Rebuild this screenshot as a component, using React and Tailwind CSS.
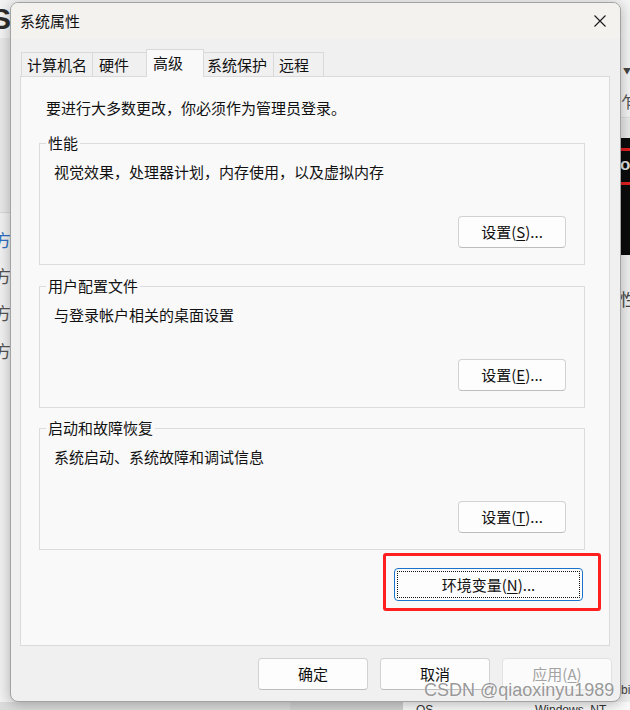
import React from "react";

const cjk = "font-['Noto_Sans_CJK_SC','Noto_Sans',sans-serif]";

function Btn({ children, w = "w-[108px]", disabled = false, className = "" }) {
  return (
    <div
      className={`${w} h-[32px] flex items-center justify-center rounded-[4px] border text-[15px] leading-[20px] ${
        disabled
          ? "bg-[#fbfbfb] border-[#e2e2e2] text-[#a3a3a3]"
          : "bg-[#fdfdfd] border-[#d2d2d2] border-b-[#bdbdbd] text-[#111]"
      } ${className}`}
    >
      {children}
    </div>
  );
}

function Group({ title, text, children }) {
  return (
    <div className="relative w-[546px] h-[122px] border border-[#dcdcdc] flex flex-col">
      <span className="absolute top-[-11px] left-[6px] px-[2px] bg-[#f9f9f9] text-[15px] leading-[20px] text-[#111]">
        {title}
      </span>
      <div className="pt-[18px] pl-[14px] text-[15px] leading-[20px] text-[#111]">{text}</div>
      <div className="mt-auto self-end mr-[18px] mb-[16px]">{children}</div>
    </div>
  );
}

function Tab({ label, w, pl, selected, borderL = true, borderR = false }) {
  return (
    <div
      className={`${w} ${pl} flex items-center text-[15px] leading-[20px] text-[#111] border-t border-[#d9d9d9] ${
        borderL ? "border-l" : ""
      } ${borderR ? "border-r" : ""} ${
        selected ? "h-[28px] mb-[-1px] bg-[#f9f9f9] relative z-10 pb-[2px]" : "h-[24px] bg-[#f0f0f0]"
      }`}
    >
      {label}
    </div>
  );
}

export default function App() {
  return (
    <div className={`relative w-[630px] h-[710px] overflow-hidden bg-[#eeeeee] ${cjk}`}>
      {/* background desktop scraps */}
      <div className="absolute left-0 top-0 w-[630px] h-[38px] bg-[#f4f4f4]" />
      <div className="absolute left-0 top-[38px] w-[12px] h-[175px] bg-[#e8e8e8] border-b border-[#dadada]" />
      <div className="absolute left-0 top-[214px] w-[12px] h-[488px] bg-[#f1f1f1]" />
      <span className="absolute left-[-9px] top-[1px] text-[30px] leading-[36px] font-semibold text-[#2c2c2c] font-['Liberation_Sans',sans-serif]">
        S
      </span>
      <span className="absolute left-[-6px] top-[230px] text-[17px] leading-[20px] text-[#2f6fc2]">方</span>
      <span className="absolute left-[-6px] top-[266px] text-[17px] leading-[20px] text-[#555]">方</span>
      <span className="absolute left-[-6px] top-[303px] text-[17px] leading-[20px] text-[#555]">方</span>
      <span className="absolute left-[-6px] top-[341px] text-[17px] leading-[20px] text-[#555]">方</span>

      <div className="absolute left-[618px] top-[38px] w-[12px] h-[80px] bg-[#f3f3f3] border-b border-[#dcdcdc]" />
      <span className="absolute left-[623px] top-[66px] text-[8px] leading-[10px] text-[#444]">▼</span>
      <span className="absolute left-[621px] top-[91px] text-[16px] leading-[20px] text-[#555]">乍</span>
      <div className="absolute left-[618px] top-[119px] w-[12px] h-[19px] bg-[#e8e8e8]" />
      <div className="absolute left-[618px] top-[138px] w-[12px] h-[117px] bg-[#0b0b0b] flex flex-col">
        <div className="mt-[10px] h-[3px] bg-[#e02020]" />
        <span className="mt-[5px] text-[17px] leading-[18px] font-bold text-[#ddd] pl-[2px] font-['Liberation_Sans',sans-serif]">
          oy
        </span>
        <div className="mt-[8px] h-[3px] bg-[#e02020]" />
      </div>
      <div className="absolute left-[618px] top-[255px] w-[12px] h-[447px] bg-[#efefef]" />
      <span className="absolute left-[620px] top-[289px] text-[17px] leading-[20px] text-[#444]">性</span>
      <span className="absolute left-[621px] top-[683px] text-[12px] leading-[14px] text-[#444] font-['Liberation_Sans',sans-serif]">
        bile
      </span>

      <div className="absolute left-0 top-[702px] w-[290px] h-[8px] bg-[#dcdcdc]" />
      <div className="absolute left-[290px] top-[702px] w-[113px] h-[8px] bg-[#d2d2d2]" />
      <div className="absolute left-[403px] top-[702px] w-[227px] h-[8px] bg-[#fafafa]">
        <span className="absolute left-[13px] top-[1px] text-[12px] leading-[14px] text-[#333] font-['Liberation_Sans',sans-serif]">
          OS
        </span>
        <span className="absolute left-[132px] top-[1px] text-[12px] leading-[14px] text-[#333] font-['Liberation_Sans',sans-serif]">
          Windows_NT
        </span>
      </div>

      {/* dialog window */}
      <div className="relative z-10 ml-[10px] mt-[2px] w-[611px] h-[700px] rounded-[8px] border border-[#a3a3a3] bg-[#f0f0f0] overflow-hidden shadow-[0_2px_14px_rgba(0,0,0,0.28)] flex flex-col">
        {/* title bar */}
        <div className="h-[36px] bg-[#f3f2ef] flex items-center justify-between pl-[9px] pr-[14px]">
          <span className="text-[15px] leading-[20px] text-[#111]">系统属性</span>
          <svg width="12" height="12" viewBox="0 0 12 12">
            <path d="M0.5 0.5L11.5 11.5M11.5 0.5L0.5 11.5" stroke="#1a1a1a" strokeWidth="1.1" fill="none" />
          </svg>
        </div>

        {/* body */}
        <div className="flex-1 flex flex-col pt-[10px] pl-[9px] pr-[10px]">
          {/* tabs */}
          <div className="h-[27px] flex items-end pl-[1px]">
            <Tab label="计算机名" w="w-[71px]" pl="pl-[5px]" />
            <Tab label="硬件" w="w-[54px]" pl="pl-[6px]" />
            <Tab label="高级" w="w-[58px]" pl="pl-[6px]" selected borderR />
            <Tab label="系统保护" w="w-[69px]" pl="pl-[3px]" borderL={false} />
            <Tab label="远程" w="w-[51px]" pl="pl-[5px]" borderR />
          </div>

          {/* panel */}
          <div className="w-[590px] h-[570px] border border-[#dadada] bg-[#f9f9f9] flex flex-col pt-[21px] pl-[18px]">
            <div className="pl-[7px] text-[15px] leading-[20px] text-[#111]">
              要进行大多数更改，你必须作为管理员登录。
            </div>

            <div className="mt-[25px]">
              <Group title="性能" text="视觉效果，处理器计划，内存使用，以及虚拟内存">
                <Btn>
                  设置(<span className="underline underline-offset-2">S</span>)...
                </Btn>
              </Group>
            </div>
            <div className="mt-[21px]">
              <Group title="用户配置文件" text="与登录帐户相关的桌面设置">
                <Btn>
                  设置(<span className="underline underline-offset-2">E</span>)...
                </Btn>
              </Group>
            </div>
            <div className="mt-[20px]">
              <Group title="启动和故障恢复" text="系统启动、系统故障和调试信息">
                <Btn>
                  设置(<span className="underline underline-offset-2">T</span>)...
                </Btn>
              </Group>
            </div>

            <div className="mt-[3px] self-end mr-[8px] w-[218px] h-[58px] border-[3px] border-[#ff1f1f] rounded-[3px] pl-[8px] pt-[12px]">
              <div className="w-[189px] h-[33px] flex items-center justify-center rounded-[4px] border border-[#1a73c8] bg-[#fdfdfd] text-[15px] leading-[20px] text-[#111] outline-1 outline-dotted outline-[#111] outline-offset-[-4px]">
                环境变量(<span className="underline underline-offset-2">N</span>)...
              </div>
            </div>
          </div>

          {/* footer buttons */}
          <div className="mt-[12px] mr-[-2px] flex justify-end gap-[12px]">
            <Btn w="w-[110px]">确定</Btn>
            <Btn w="w-[110px]">取消</Btn>
            <Btn w="w-[110px]" disabled>
              应用(<span className="underline underline-offset-2">A</span>)
            </Btn>
          </div>
        </div>
      </div>

      {/* watermark */}
      <span className="absolute z-20 left-[424px] top-[679px] text-[18px] leading-[22px] text-[#8c8c8c]/90 font-['Liberation_Sans',sans-serif] [text-shadow:0_0_2px_rgba(255,255,255,0.9)]">
        CSDN @qiaoxinyu1989
      </span>
    </div>
  );
}
